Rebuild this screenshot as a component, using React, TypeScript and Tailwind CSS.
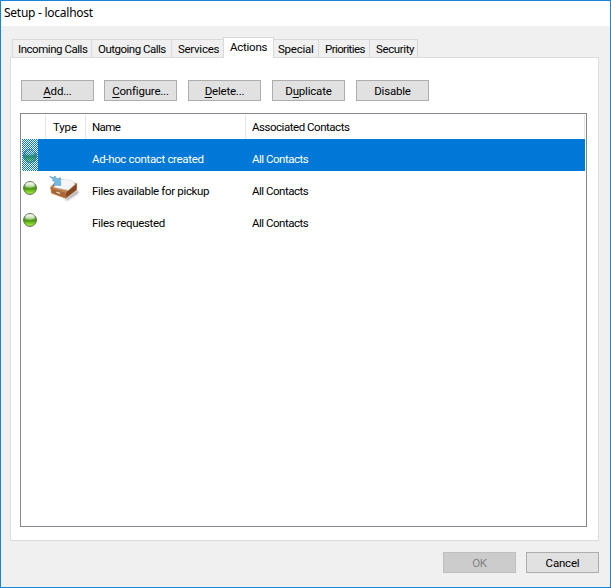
import clsx from 'clsx';

interface Tab {
  label: string;
  width: string;
  active?: boolean;
}

interface Action {
  name: string;
  contacts: string;
  hasIcon?: boolean;
  selected?: boolean;
}

const tabs: Tab[] = [
  { label: 'Incoming Calls', width: 'w-[80px] border-l pl-[5px] tracking-[-0.46px]' },
  { label: 'Outgoing Calls', width: 'w-[80px] pl-[6px] tracking-[-0.5px]' },
  { label: 'Services', width: 'w-[51px] border-r-0 pl-[6px] tracking-[-0.28px]' },
  { label: 'Actions', width: 'w-[51px] pl-[6px] tracking-[-0.25px]', active: true },
  { label: 'Special', width: 'w-[45px] pl-[4px] tracking-[-0.25px]' },
  { label: 'Priorities', width: 'w-[51px] pl-[6px] tracking-[-0.6px]' },
  { label: 'Security', width: 'w-[48px] pl-[6px] tracking-[-0.38px]' },
];

const actions: Action[] = [
  { name: 'Ad-hoc contact created', contacts: 'All Contacts', selected: true },
  { name: 'Files available for pickup', contacts: 'All Contacts', hasIcon: true },
  { name: 'Files requested', contacts: 'All Contacts' },
];

interface ButtonProps {
  label: string;
  accessKey?: string;
  disabled?: boolean;
}

function Button({ label, accessKey, disabled }: ButtonProps) {
  const at = accessKey ? label.indexOf(accessKey) : -1;
  return (
    <button
      disabled={disabled}
      className={clsx(
        'flex h-[21px] w-[73px] shrink-0 items-center justify-center border text-[11.5px] leading-[19px] tracking-[-0.2px]',
        disabled ? 'border-[#bfbfbf] bg-[#cccccc] text-[#838383]' : 'border-[#adadad] bg-[#e1e1e1] text-black',
      )}
    >
      <span className="pt-px">
        {at < 0 ? (
          label
        ) : (
          <>
            {label.slice(0, at)}
            <span className="underline underline-offset-2">{accessKey}</span>
            {label.slice(at + 1)}
          </>
        )}
      </span>
    </button>
  );
}

function StatusLight({ selected }: { selected?: boolean }) {
  return (
    <svg width="16" height="32" viewBox="0 0 16 32" className="shrink-0">
      <defs>
        <linearGradient id="light" x1="0" y1="0" x2="0" y2="1">
          <stop offset="0" stopColor="#c3d4b8" />
          <stop offset="0.4" stopColor="#6dab42" />
          <stop offset="0.55" stopColor="#4a9a0c" />
          <stop offset="0.8" stopColor="#86d62c" />
          <stop offset="1" stopColor="#b4ee5f" />
        </linearGradient>
        <linearGradient id="shine" x1="0" y1="0" x2="0" y2="1">
          <stop offset="0" stopColor="#ffffff" stopOpacity="0.95" />
          <stop offset="1" stopColor="#ffffff" stopOpacity="0.35" />
        </linearGradient>
        <pattern id="dither" width="2" height="2" patternUnits="userSpaceOnUse">
          <rect width="1" height="1" fill="#0078d7" />
          <rect x="1" y="1" width="1" height="1" fill="#0078d7" />
        </pattern>
      </defs>
      {selected && <rect width="16" height="32" fill="#ffffff" />}
      <circle cx="8" cy="17" r="6.4" fill="url(#light)" stroke="#4d5f45" strokeWidth="0.9" />
      <ellipse cx="8" cy="14" rx="4.6" ry="2.8" fill="url(#shine)" />
      {selected && <rect width="16" height="32" fill="url(#dither)" shapeRendering="crispEdges" />}
    </svg>
  );
}

function TrayIcon() {
  return (
    <svg width="32" height="32" viewBox="0 0 32 32">
      <defs>
        <linearGradient id="paper" x1="0" y1="0" x2="1" y2="1">
          <stop offset="0" stopColor="#ffffff" />
          <stop offset="1" stopColor="#eceeef" />
        </linearGradient>
        <filter id="soft" x="-20%" y="-20%" width="140%" height="140%">
          <feGaussianBlur stdDeviation="0.9" />
        </filter>
      </defs>
      <path d="M5 21 17 28 30 19 30.5 22 19 29.5Z" fill="#666666" opacity="0.6" filter="url(#soft)" />
      <path d="M2.5 16 11 7.5 28.8 12.5 28.5 19 17.5 27.3 3.5 22Z" fill="#8f5127" />
      <path d="M2.5 16 11 7.5 28.8 12.5 18 22Z" fill="#bc8455" />
      <path d="M5.8 16.2 11.5 8 24 9.5 27.2 13 20.5 19.5Z" fill="url(#paper)" stroke="#c4c4c4" strokeWidth="0.4" />
      <path d="M2.5 16.5 18 21.6 17.5 27.3 3.5 22.3Z" fill="#ad6736" stroke="#d69a67" strokeWidth="0.5" />
      <path d="M18 21.6 28.8 12.7 28.5 19 17.5 27.3Z" fill="#834620" stroke="#bb7c4c" strokeWidth="0.4" />
      <path d="M8 20 12.5 21.5 12.4 23.4 8 22Z" fill="#f4e5d4" stroke="#70401f" strokeWidth="0.5" />
      <path d="M1.5 5.5 5.3 6.6 7 5 9 8 12.5 6.8 12.8 14.5 5.2 14 7.2 11.3 4.5 9.5 5 8.2Z" fill="#72b9e4" stroke="#4b91c0" strokeWidth="0.5" />
    </svg>
  );
}

function ActionRow({ action }: { action: Action }) {
  return (
    <div
      className={clsx(
        'flex h-8 w-[563px] leading-[14px]',
        action.selected ? 'bg-[#0078d7] text-white' : 'text-black',
      )}
    >
      <StatusLight selected={action.selected} />
      <div className="w-12 pl-[10px]">{action.hasIcon && <TrayIcon />}</div>
      <div className="w-40 pt-[13px] pl-[6px] tracking-[-0.34px]">{action.name}</div>
      <div className="pt-[13px] pl-[6px] tracking-[-0.48px]">{action.contacts}</div>
    </div>
  );
}

export default function App() {
  return (
    <div className="flex h-[588px] w-[611px] flex-col border border-[#1883d7] bg-[#f0f0f0] font-['Roboto',sans-serif] text-[11.5px] text-black">
      <header className="h-[25px] shrink-0 bg-white pl-[3px] font-['Noto_Sans',sans-serif] text-[12px] leading-[24px] tracking-[-0.26px]">
        Setup - localhost
      </header>

      <nav className="mt-[11px] ml-[11px] flex h-5 shrink-0 items-end">
        {tabs.map((tab) => (
          <div
            key={tab.label}
            className={clsx(
              'shrink-0 whitespace-nowrap border-t border-r border-[#d9d9d9]',
              tab.active ? 'relative -mb-px h-[21px] border-l bg-white leading-[19px]' : 'h-[18px] leading-[18px]',
              tab.width,
            )}
          >
            {tab.label}
          </div>
        ))}
      </nav>

      <main className="ml-[9px] flex h-[484px] w-[589px] shrink-0 flex-col border border-[#dcdcdc] bg-white px-[9px] pt-[22px]">
        <div className="ml-px flex">
          <div className="mr-[10px]">
            <Button label="Add..." accessKey="A" />
          </div>
          <div className="flex gap-[11px]">
            <Button label="Configure..." accessKey="C" />
            <Button label="Delete..." accessKey="D" />
            <Button label="Duplicate" accessKey="u" />
            <Button label="Disable" />
          </div>
        </div>

        <section className="mt-3 h-[414px] w-[567px] border border-[#828790] pt-px pl-px">
          <div className="flex h-6 w-[563px] leading-[24px]">
            <div className="w-6 border-r border-[#e5e5e5]" />
            <div className="w-10 border-r border-[#e5e5e5] pl-[7px] tracking-[-0.15px]">Type</div>
            <div className="w-40 border-r border-[#e5e5e5] pl-[6px] tracking-[-0.6px]">Name</div>
            <div className="flex-1 border-r border-[#e5e5e5] pl-[6px] tracking-[-0.47px]">Associated Contacts</div>
          </div>
          {actions.map((action) => (
            <ActionRow key={action.name} action={action} />
          ))}
        </section>
      </main>

      <footer className="mt-[11px] mr-[11px] flex justify-end gap-[10px]">
        <Button label="OK" disabled />
        <Button label="Cancel" />
      </footer>
    </div>
  );
}
